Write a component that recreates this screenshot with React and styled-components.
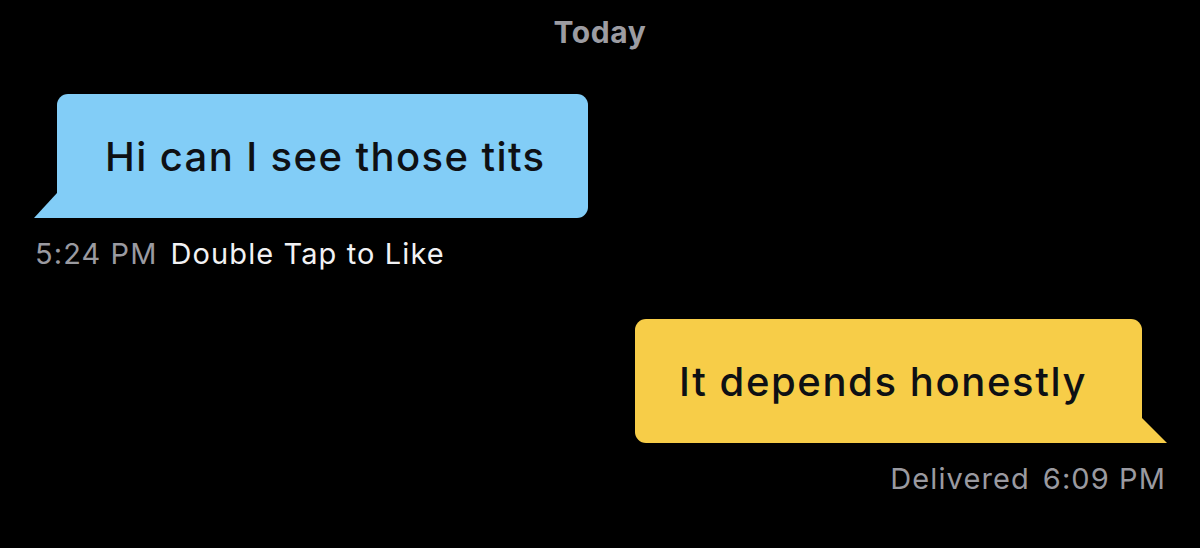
import React from "react";
import styled, { createGlobalStyle } from "styled-components";

const Global = createGlobalStyle`
  html, body { margin: 0; padding: 0; background: #000; }
  body { font-family: Inter, "Noto Sans", sans-serif; -webkit-font-smoothing: antialiased; }
`;

const Screen = styled.div`
  width: 1200px;
  height: 548px;
  background: #000;
  display: flex;
  flex-direction: column;
  overflow: hidden;
`;

const DayLabel = styled.div`
  text-align: center;
  color: #9c9ca2;
  font-weight: 700;
  font-size: 30px;
  line-height: 36px;
  margin-top: 14px;
  letter-spacing: 0.6px;
`;

const MessageGroup = styled.div`
  display: flex;
  flex-direction: column;
  align-items: ${(p) => (p.$out ? "flex-end" : "flex-start")};
  padding: ${(p) => (p.$out ? "0 58px 0 0" : "0 0 0 57px")};
  margin-top: ${(p) => p.$top}px;
`;

const Bubble = styled.div`
  position: relative;
  height: 124px;
  box-sizing: border-box;
  display: flex;
  align-items: center;
  padding: ${(p) => (p.$out ? "0 55px 0 44px" : "0 43px 0 48px")};
  background: ${(p) => (p.$out ? "#f7cd48" : "#82cdf7")};
  color: #0e1014;
  font-size: 40px;
  font-weight: 500;
  letter-spacing: ${(p) => (p.$out ? "1.6px" : "1.4px")};
  white-space: nowrap;
  border-radius: ${(p) => (p.$out ? "11px 11px 0 11px" : "11px 11px 11px 0")};

  &::after {
    content: "";
    position: absolute;
    bottom: 0;
    width: 25px;
    height: 25px;
    background: inherit;
    ${(p) =>
      p.$out
        ? "right: -25px; clip-path: polygon(0 0, 100% 100%, 0 100%);"
        : "left: -23px; width: 23px; clip-path: polygon(100% 0, 100% 100%, 0 100%);"}
  }
`;

const Meta = styled.div`
  display: flex;
  gap: 13px;
  font-size: 29px;
  line-height: 34px;
  margin-top: 19px;
  white-space: nowrap;
  ${(p) => (p.$out ? "margin-right: -24px;" : "margin-left: -22px;")}
  letter-spacing: 1.1px;
`;

const Time = styled.span`
  color: #9a9aa0;
`;

const Hint = styled.span`
  color: #f2f2f4;
`;

const Status = styled.span`
  color: #9a9aa0;
`;

export default function App() {
  return (
    <Screen>
      <Global />
      <DayLabel>Today</DayLabel>
      <MessageGroup $top={44}>
        <Bubble>Hi can I see those tits</Bubble>
        <Meta>
          <Time>5:24 PM</Time>
          <Hint>Double Tap to Like</Hint>
        </Meta>
      </MessageGroup>
      <MessageGroup $out $top={48}>
        <Bubble $out>It depends honestly</Bubble>
        <Meta $out>
          <Status>Delivered</Status>
          <Time>6:09 PM</Time>
        </Meta>
      </MessageGroup>
    </Screen>
  );
}
